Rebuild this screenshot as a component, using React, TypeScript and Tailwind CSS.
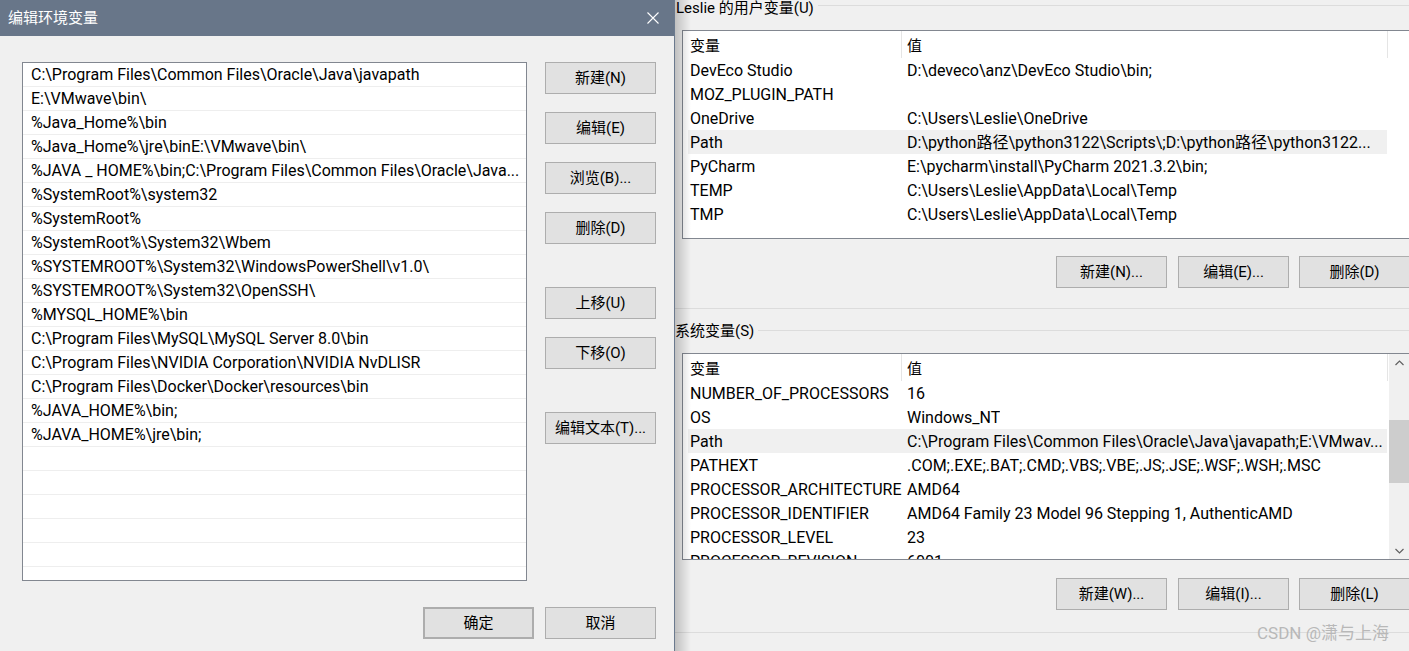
import React from "react"

const pathRows = [
  "C:\\Program Files\\Common Files\\Oracle\\Java\\javapath",
  "E:\\VMwave\\bin\\",
  "%Java_Home%\\bin",
  "%Java_Home%\\jre\\binE:\\VMwave\\bin\\",
  "%JAVA _ HOME%\\bin;C:\\Program Files\\Common Files\\Oracle\\Java...",
  "%SystemRoot%\\system32",
  "%SystemRoot%",
  "%SystemRoot%\\System32\\Wbem",
  "%SYSTEMROOT%\\System32\\WindowsPowerShell\\v1.0\\",
  "%SYSTEMROOT%\\System32\\OpenSSH\\",
  "%MYSQL_HOME%\\bin",
  "C:\\Program Files\\MySQL\\MySQL Server 8.0\\bin",
  "C:\\Program Files\\NVIDIA Corporation\\NVIDIA NvDLISR",
  "C:\\Program Files\\Docker\\Docker\\resources\\bin",
  "%JAVA_HOME%\\bin;",
  "%JAVA_HOME%\\jre\\bin;",
  "",
  "",
  "",
  "",
  "",
]

const userVars: [string, string][] = [
  ["DevEco Studio", "D:\\deveco\\anz\\DevEco Studio\\bin;"],
  ["MOZ_PLUGIN_PATH", ""],
  ["OneDrive", "C:\\Users\\Leslie\\OneDrive"],
  ["Path", "D:\\python路径\\python3122\\Scripts\\;D:\\python路径\\python3122..."],
  ["PyCharm", "E:\\pycharm\\install\\PyCharm 2021.3.2\\bin;"],
  ["TEMP", "C:\\Users\\Leslie\\AppData\\Local\\Temp"],
  ["TMP", "C:\\Users\\Leslie\\AppData\\Local\\Temp"],
]

const sysVars: [string, string][] = [
  ["NUMBER_OF_PROCESSORS", "16"],
  ["OS", "Windows_NT"],
  ["Path", "C:\\Program Files\\Common Files\\Oracle\\Java\\javapath;E:\\VMwav..."],
  ["PATHEXT", ".COM;.EXE;.BAT;.CMD;.VBS;.VBE;.JS;.JSE;.WSF;.WSH;.MSC"],
  ["PROCESSOR_ARCHITECTURE", "AMD64"],
  ["PROCESSOR_IDENTIFIER", "AMD64 Family 23 Model 96 Stepping 1, AuthenticAMD"],
  ["PROCESSOR_LEVEL", "23"],
  ["PROCESSOR_REVISION", "6001"],
]

function Btn({ label, className = "" }: { label: string; className?: string }) {
  return (
    <div
      className={`flex h-[32px] w-[111px] shrink-0 items-center justify-center border border-[#adadad] bg-[#e1e1e1] text-[15px] text-black ${className}`}
    >
      {label}
    </div>
  )
}

function VarList({ rows, className, scroll }: { rows: [string, string][]; className: string; scroll?: boolean }) {
  return (
    <div className={`ml-[7px] flex w-[728px] shrink-0 overflow-hidden border border-[#828790] bg-white ${className}`}>
      <div className="min-w-0 flex-1">
        {/* header */}
        <div className="ml-[5px] flex h-[27px] text-[15px]">
          <div className="flex w-[214px] items-center border-r border-[#e5e5e5] pl-[2px] pt-[3px]">变量</div>
          <div className="flex w-[486px] items-center border-r border-[#e5e5e5] pl-[5px] pt-[3px]">值</div>
        </div>
        {rows.map(([name, value]) => (
          <div
            key={name}
            className={`ml-[5px] flex h-[24px] w-[699px] items-center pt-[1px] text-[16px] ${name === "Path" ? "bg-[#f0f0f0]" : ""}`}
          >
            <div className="w-[214px] shrink-0 whitespace-nowrap pl-[2px]">{name}</div>
            <div className="overflow-hidden whitespace-nowrap pl-[5px]">{value}</div>
          </div>
        ))}
      </div>
      {scroll && (
        <div className="flex w-[20px] shrink-0 flex-col bg-[#f0f0f0]">
          <div className="flex h-[17px] items-center justify-center">
            <svg width="9" height="6" viewBox="0 0 9 6">
              <polyline points="0.5,5 4.5,1 8.5,5" fill="none" stroke="#606060" strokeWidth="1.2" />
            </svg>
          </div>
          <div className="flex-1">
            <div className="mt-[49px] h-[63px] bg-[#cdcdcd]" />
          </div>
          <div className="flex h-[17px] items-center justify-center">
            <svg width="9" height="6" viewBox="0 0 9 6">
              <polyline points="0.5,1 4.5,5 8.5,1" fill="none" stroke="#606060" strokeWidth="1.2" />
            </svg>
          </div>
        </div>
      )}
    </div>
  )
}

export default function App() {
  return (
    <div className="flex h-[651px] w-[1409px] overflow-hidden bg-[#f0f0f0] font-['Roboto','Noto_Sans_CJK_SC',sans-serif] text-black">
      {/* Edit dialog */}
      <div className="flex w-[675px] shrink-0 flex-col border-r border-[#6b7a8e] bg-[#f0f0f0]">
        <div className="flex h-[36px] shrink-0 items-center justify-between bg-[#687689] pl-[8px] pr-[15px]">
          <span className="text-[15px] text-white">编辑环境变量</span>
          <svg width="12" height="12" viewBox="0 0 12 12">
            <path d="M0.5 0.5 L11.5 11.5 M11.5 0.5 L0.5 11.5" stroke="#ffffff" strokeWidth="1.1" />
          </svg>
        </div>

        <div className="ml-[22px] mt-[26px] flex">
          <div className="h-[519px] w-[505px] shrink-0 overflow-hidden border border-[#828790] bg-white">
            {pathRows.map((row, i) => (
              <div
                key={i}
                className="flex h-[24px] items-center overflow-hidden whitespace-nowrap border-b border-[#eeeeee] pl-[8px] pt-[1px] text-[16px]"
              >
                {row}
              </div>
            ))}
          </div>
          <div className="ml-[18px] flex flex-col">
            <Btn label="新建(N)" />
            <Btn label="编辑(E)" className="mt-[18px]" />
            <Btn label="浏览(B)..." className="mt-[18px]" />
            <Btn label="删除(D)" className="mt-[18px]" />
            <Btn label="上移(U)" className="mt-[43px]" />
            <Btn label="下移(O)" className="mt-[18px]" />
            <Btn label="编辑文本(T)..." className="mt-[43px]" />
          </div>
        </div>

        <div className="ml-[423px] mt-[26px] flex gap-[11px]">
          <Btn label="确定" className="border-2 border-[#0078d7]" />
          <Btn label="取消" />
        </div>
      </div>

      {/* Environment variables window behind */}
      <div className="relative flex min-w-0 flex-1 flex-col overflow-hidden">
        <div className="flex h-[16px] items-start">
          <span className="ml-[1px] whitespace-nowrap text-[15px] leading-[16px]">Leslie 的用户变量(U)</span>
          <div className="ml-[4px] mt-[5px] h-px flex-1 bg-[#dcdcdc]" />
        </div>
        <VarList rows={userVars} className="mt-[14px] h-[209px]" />
        <div className="ml-[381px] mt-[17px] flex gap-[11px]">
          <Btn label="新建(N)..." />
          <Btn label="编辑(E)..." />
          <Btn label="删除(D)" className="-ml-[1px]" />
        </div>
        <div className="mt-[20px] h-px shrink-0 bg-[#dcdcdc]" />

        <div className="mt-[14px] flex h-[16px] items-start">
          <span className="whitespace-nowrap text-[15px] leading-[16px]">系统变量(S)</span>
          <div className="ml-[4px] mt-[7px] h-px flex-1 bg-[#dcdcdc]" />
        </div>
        <VarList rows={sysVars} className="mt-[14px] h-[207px]" scroll />
        <div className="ml-[381px] mt-[18px] flex gap-[11px]">
          <Btn label="新建(W)..." />
          <Btn label="编辑(I)..." />
          <Btn label="删除(L)" className="-ml-[1px]" />
        </div>
        <div className="mt-[22px] h-px shrink-0 bg-[#dcdcdc]" />

        {/* dialog drop shadow */}
        <div className="pointer-events-none absolute inset-y-0 left-0 w-[16px] bg-gradient-to-r from-black/20 to-transparent" />
        {/* watermark */}
        <div className="pointer-events-none absolute left-[582px] top-[623px] whitespace-nowrap text-[17px] leading-[20px] text-[#b8b8b8]">
          CSDN @潇与上海
        </div>
      </div>
    </div>
  )
}
